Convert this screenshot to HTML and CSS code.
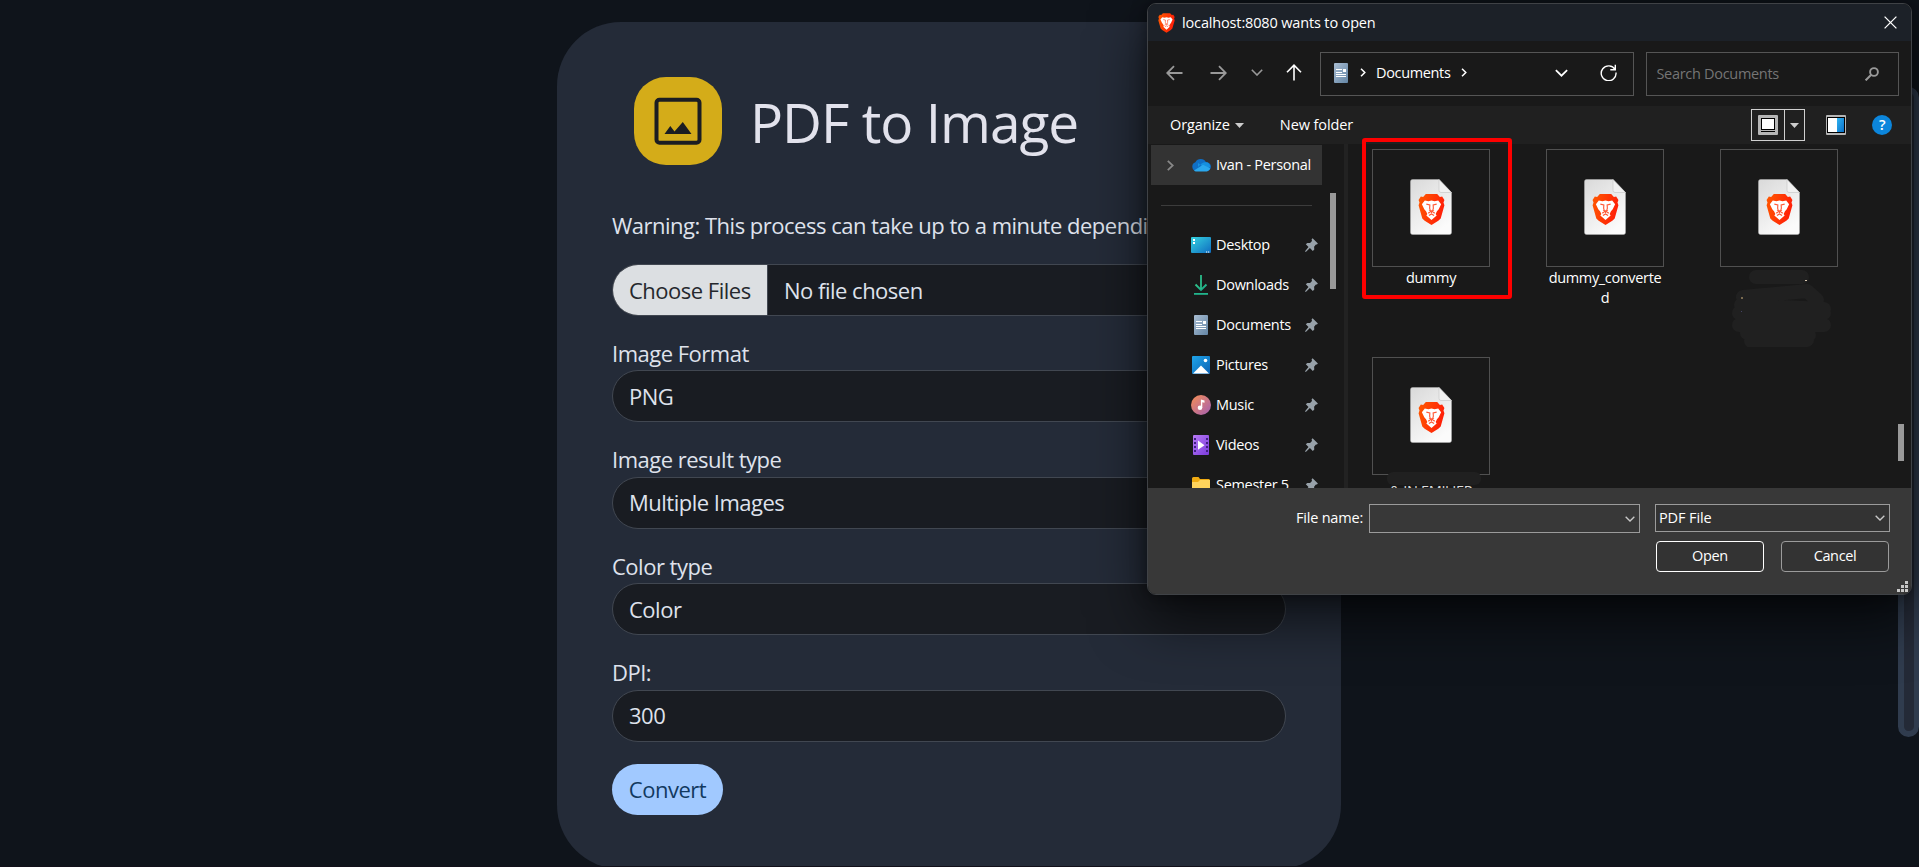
FILE: index.html
```html
<!DOCTYPE html>
<html lang="en">
<head>
<meta charset="utf-8">
<title>PDF to Image</title>
<link rel="stylesheet" href="styles.css">
</head>
<body>
<svg width="0" height="0" class="defs">
  <defs>
    <linearGradient id="gBrave" x1="0" y1="0" x2="1" y2="0.3"><stop offset="0" stop-color="#ff5a00"/><stop offset="1" stop-color="#ff2008"/></linearGradient>
    <linearGradient id="gPage" x1="0" y1="0" x2="0.6" y2="1"><stop offset="0" stop-color="#d9d9d9"/><stop offset="1" stop-color="#fbfbfb"/></linearGradient>
    <linearGradient id="gDoc" x1="0" y1="0" x2="1" y2="1"><stop offset="0" stop-color="#a9bdd2"/><stop offset="1" stop-color="#6486a6"/></linearGradient>
    <linearGradient id="gDesk" x1="0" y1="0" x2="1" y2="1"><stop offset="0" stop-color="#36d3e0"/><stop offset="1" stop-color="#0f6cc0"/></linearGradient>
    <linearGradient id="gPic" x1="0" y1="0" x2="1" y2="1"><stop offset="0" stop-color="#1fa5ea"/><stop offset="1" stop-color="#0b62b4"/></linearGradient>
    <linearGradient id="gMusic" x1="0" y1="0" x2="1" y2="1"><stop offset="0.1" stop-color="#ef8a5c"/><stop offset="1" stop-color="#a35fb5"/></linearGradient>
    <linearGradient id="gVid" x1="0" y1="0" x2="1" y2="1"><stop offset="0" stop-color="#b87af5"/><stop offset="1" stop-color="#7a3bdc"/></linearGradient>
    <linearGradient id="gPane" x1="0" y1="0" x2="1" y2="1"><stop offset="0" stop-color="#2fb4f2"/><stop offset="1" stop-color="#0a6fc8"/></linearGradient>
    <linearGradient id="gDown" x1="0" y1="0" x2="1" y2="1"><stop offset="0" stop-color="#2fc58a"/><stop offset="1" stop-color="#17a589"/></linearGradient>
    <symbol id="brave" viewBox="0 0 26 30">
      <path d="M7.500 0h11l2.600 2.900 2.200-.4 2.200 3.400-.9 2.400.9 2.700-3.600 12.600-2.300 2.200-6.600 4.200-6.600-4.200-2.300-2.200L.5 11l.9-2.700L.5 5.900l2.200-3.400 2.200.4z" fill="url(#gBrave)"/>
      <path d="M6.500 6.200l3.500.8 3-.8 3 .8 3.500-.8 2.800 3.600-2.300 5-1.700 2-1.300 2.600 1 1.300-5 4.500-5-4.500 1-1.300-1.300-2.600-1.700-2-2.300-5z" fill="#fff"/>
      <path d="M8 9.800l3.400.7-.2 3.300.6 2.200M18 9.800l-3.400.7.2 3.300-.6 2.200M9.800 18.500l1.700-.8M16.200 18.500l-1.700-.8M10.500 20.800L13 19.300l2.500 1.500M11.500 16.300h3L13 18z" fill="none" stroke="#ff5a38" stroke-width="1.100"/>
    </symbol>
    <symbol id="file" viewBox="0 0 42 56">
      <path d="M2.500.5H29L41.500 13.500v40a2 2 0 0 1-2 2h-37a2 2 0 0 1-2-2v-51a2 2 0 0 1 2-2z" fill="url(#gPage)" stroke="#b5b5b5" stroke-width=".5"/>
      <path d="M29 .5L41.500 13.500H31a2 2 0 0 1-2-2z" fill="#f1f1f1" stroke="#c9c9c9" stroke-width=".7"/>
      <use href="#brave" x="8" y="15" width="27" height="31"/>
    </symbol>
    <symbol id="doc" viewBox="0 0 14 20">
      <rect width="14" height="20" rx="1" fill="url(#gDoc)"/>
      <path d="M2 6.500h6M2 9.500h6M2 11.500h10M2 13.500h10" stroke="#fff" stroke-width="1"/><rect x="9" y="6" width="3" height="3" fill="#fff"/>
    </symbol>
    <symbol id="pin" viewBox="0 0 13 14">
      <path d="M7.600.3L12.900 5.600l-1 1-1-.1-1.800 2.200.2 2.900-1.500 1.400-2.900-2.900L.8 14l-.8-.8 3.500-4.200L.8 6.300l1.500-1.400 2.800.2 1.900-2-.4-1.800z" fill="#98a2aa"/>
    </symbol>
    <symbol id="down" viewBox="0 0 12 7"><path d="M.8.8L6 6 11.200.8" fill="none" stroke="currentColor" stroke-width="1.600"/></symbol>
    <symbol id="right" viewBox="0 0 6 10"><path d="M.8.8L5 5 .8 9.200" fill="none" stroke="currentColor" stroke-width="1.700"/></symbol>
  </defs>
</svg>

<main class="card">
  <header class="head">
    <span class="badge">
      <svg width="48" height="48" viewBox="0 0 48 48"><rect x="2.500" y="2.700" width="43" height="43" rx="3" fill="none" stroke="#1b1d22" stroke-width="4"/><path d="M10.500 37l5.800-8 4.200 5.500 8.300-9.500 8.700 12z" fill="#1b1d22"/></svg>
    </span>
    <h1>PDF to Image</h1>
  </header>
  <p class="warning">Warning: This process can take up to a minute depending</p>
  <div class="control file"><span class="choose"><span>Choose Files</span></span><span>No file chosen</span></div>
  <div class="group"><label>Image Format</label><div class="control"><span>PNG</span></div></div>
  <div class="group"><label>Image result type</label><div class="control"><span>Multiple Images</span></div></div>
  <div class="group"><label>Color type</label><div class="control"><span>Color</span></div></div>
  <div class="group"><label>DPI:</label><div class="control"><span>300</span></div></div>
  <button class="convert">Convert</button>
</main>
<div class="page-scroll"></div>
<div class="bottom-line"></div>

<section class="dialog">
  <div class="titlebar">
    <svg width="17" height="20"><use href="#brave"/></svg>
    <span class="title">localhost:8080 wants to open</span>
    <svg class="close" width="13" height="13" viewBox="0 0 13 13"><path d="M.6.6l11.800 11.800M12.400.6L.6 12.400" stroke="#fff" stroke-width="1.300"/></svg>
  </div>
  <div class="nav">
    <svg class="dim" width="17" height="16" viewBox="0 0 17 16"><path d="M16.500 8H1.500M8 1.200L1.200 8 8 14.800" fill="none" stroke="currentColor" stroke-width="1.800"/></svg>
    <svg class="dim fwd" width="17" height="16" viewBox="0 0 17 16"><path d="M.5 8h15M9 1.200L15.800 8 9 14.800" fill="none" stroke="currentColor" stroke-width="1.800"/></svg>
    <svg class="dim rec" width="12" height="7"><use href="#down"/></svg>
    <svg class="up" width="16" height="17" viewBox="0 0 16 17"><path d="M8 16.500v-15M1 8.200l7-7 7 7" fill="none" stroke="currentColor" stroke-width="1.600"/></svg>
    <div class="address">
      <svg width="14" height="20"><use href="#doc"/></svg>
      <svg class="crumb" width="6" height="9"><use href="#right"/></svg>
      <span class="t-path">Documents</span>
      <svg class="crumb2" width="6" height="9"><use href="#right"/></svg>
      <svg class="drop" width="13" height="8"><use href="#down"/></svg>
      <svg class="reload" width="17" height="17" viewBox="0 0 17 17"><path d="M15 5.500A7.400 7.400 0 1 0 16 8.500M15.300.8v5h-5" fill="none" stroke="#fff" stroke-width="1.400"/></svg>
    </div>
    <div class="search"><span>Search Documents</span>
      <svg width="14" height="14" viewBox="0 0 14 14"><circle cx="9" cy="5" r="3.900" fill="none" stroke="#999" stroke-width="1.900"/><path d="M6.200 7.800L.6 13.400" stroke="#999" stroke-width="2"/></svg>
    </div>
  </div>
  <div class="toolbar">
    <span class="t-org">Organize</span>
    <svg class="tri" width="9" height="5"><path d="M0 0h9L4.500 5z" fill="#ccc"/></svg>
    <span class="t-new">New folder</span>
    <div class="view">
      <span class="viewicon"><svg width="20" height="20"><rect width="20" height="20" rx="1" fill="#b5b5b5"/><rect x="3.500" y="3.500" width="13" height="11" fill="#fff" stroke="#000" stroke-width="1"/><path d="M3 16.500h14" stroke="#000" stroke-width="1"/></svg></span>
      <span class="viewdrop"><svg width="9" height="5"><path d="M0 0h9L4.500 5z" fill="#ccc"/></svg></span>
    </div>
    <svg class="pane" width="20" height="20"><rect width="20" height="20" rx="1" fill="#b5b5b5"/><rect x="1" y="2" width="18" height="16" fill="#000"/><rect x="2" y="3" width="9" height="14" fill="#fff"/><rect x="11" y="3" width="7" height="14" fill="url(#gPane)"/></svg>
    <span class="help">?</span>
  </div>
  <div class="content">
    <aside class="side">
      <div class="item selected">
        <svg class="exp" width="7" height="11" viewBox="0 0 7 11"><path d="M.8.8l5 4.700-5 4.700" fill="none" stroke="#888" stroke-width="1.800"/></svg>
        <svg class="ico" width="20" height="14" viewBox="0 0 20 14"><path d="M5 13a4.500 4.500 0 0 1-.6-8.700A6 6 0 0 1 15 4.200a4.400 4.400 0 0 1 1 8.800z" fill="#0f6fc6"/><path d="M7 5l8 6 4-2a4 4 0 0 0-4-4.800C13 3.800 10 5 7 9z" fill="#1590e0"/><path d="M3 12.500L12 6.800l7.200 3.500A3.800 3.800 0 0 1 16 13.500H5a4 4 0 0 1-2-1z" fill="#2aa8ee"/></svg>
        <span class="name">Ivan - Personal</span>
      </div>
      <hr>
      <div class="item"><svg class="ico" width="20" height="16"><rect width="20" height="16" rx="1" fill="url(#gDesk)"/><path d="M2 2h2v2H2zM2 5h2v2H2zM15 14.500h1.200v1H15zM17 14.500h1.200v1H17z" fill="#fff"/></svg><span class="name">Desktop</span><svg class="pin" width="13" height="14"><use href="#pin"/></svg></div>
      <div class="item"><svg class="ico" width="20" height="20"><path d="M4.500 9.500L10 15l5.500-5.500" fill="none" stroke="url(#gDown)" stroke-width="1.900"/><path d="M9.100 0h1.800v14H9.100z" fill="#2bbd8b"/><path d="M3 18h14v1.800H3z" fill="#21b48c"/></svg><span class="name">Downloads</span><svg class="pin" width="13" height="14"><use href="#pin"/></svg></div>
      <div class="item"><svg class="ico" width="20" height="20"><use href="#doc" x="3" width="14" height="20"/></svg><span class="name">Documents</span><svg class="pin" width="13" height="14"><use href="#pin"/></svg></div>
      <div class="item"><svg class="ico" width="20" height="18"><rect x="1" width="18" height="18" rx="1" fill="url(#gPic)"/><path d="M2 17.500L10 9.500l8 8z" fill="#fff"/><circle cx="14.500" cy="4.500" r="1.800" fill="#fff"/></svg><span class="name">Pictures</span><svg class="pin" width="13" height="14"><use href="#pin"/></svg></div>
      <div class="item"><svg class="ico" width="20" height="20"><circle cx="10" cy="10" r="10" fill="url(#gMusic)"/><circle cx="9" cy="12.800" r="2.300" fill="#fff"/><path d="M9.900 4.500l3.600 1v2.300l-2.200-.5v5.500H9.900z" fill="#fff"/></svg><span class="name">Music</span><svg class="pin" width="13" height="14"><use href="#pin"/></svg></div>
      <div class="item"><svg class="ico" width="20" height="20"><rect x="2" width="16" height="20" rx="1" fill="url(#gVid)"/><path d="M3 3h2v2H3zM3 7h2v2H3zM3 11h2v2H3zM3 15h2v2H3zM15 3h2v2h-2zM15 7h2v2h-2zM15 11h2v2h-2zM15 15h2v2h-2z" fill="#3f2080"/><path d="M7 5.500l6.500 4.700L7 14.800z" fill="#fff"/></svg><span class="name">Videos</span><svg class="pin" width="13" height="14"><use href="#pin"/></svg></div>
      <div class="item"><svg class="ico" width="20" height="16"><path d="M1 1.500A1.500 1.500 0 0 1 2.500 0h5L9 2h9.500V16H1z" fill="#f0ab12"/><path d="M1 5h6l2-2h10v13H1z" fill="#ffd35c"/></svg><span class="name">Semester 5</span><svg class="pin" width="13" height="14"><use href="#pin"/></svg></div>
      <span class="side-thumb"></span>
    </aside>
    <div class="files">
      <figure><div class="thumb"><svg width="42" height="56"><use href="#file"/></svg></div><figcaption>dummy</figcaption></figure>
      <figure><div class="thumb"><svg width="42" height="56"><use href="#file"/></svg></div><figcaption>dummy_converte<br>d</figcaption></figure>
      <figure><div class="thumb"><svg width="42" height="56"><use href="#file"/></svg></div>
        <svg class="scribble" width="106" height="80"><path d="M27 10H73M14 30L78 24 88 33M10 46H95M12 38L95 42M10 58L95 58M18 66L80 68M22 74L78 73M16 50H80" fill="none" stroke="#202020" stroke-width="14" stroke-linecap="round" stroke-linejoin="round"/><path d="M76 13h2v1h-2z" fill="#d8c8b0"/><path d="M12 30h2v2h-2z" fill="#7a6a50"/><path d="M12 44h1v1h-1z" fill="#446"/></svg></figure>
      <figure><div class="thumb"><svg width="42" height="56"><use href="#file"/></svg></div><figcaption class="cut">&amp; IN EMILIER</figcaption><span class="smudge"></span></figure>
      <span class="files-thumb"></span>
    </div>
  </div>
  <div class="footer">
    <div class="row">
      <span class="t-fn">File name:</span>
      <div class="combo fname"><svg width="10" height="6"><use href="#down"/></svg></div>
      <div class="combo ftype"><span class="t-pdf">PDF File</span><svg width="10" height="6"><use href="#down"/></svg></div>
    </div>
    <div class="row buttons"><button class="btn primary">Open</button><button class="btn">Cancel</button></div>
    <svg class="grip" width="12" height="12"><path d="M8 0h3v3H8zM4 4h3v3H4zM8 4h3v3H8zM0 8h3v3H0zM4 8h3v3H4zM8 8h3v3H8z" fill="#c8c8c8"/></svg>
  </div>
  <div class="highlight"></div>
</section>
</body>
</html>
```

FILE: styles.css
```css
* { box-sizing: border-box; }
body { margin: 0; height: 867px; overflow: hidden; position: relative; background: #0f141b; font-family: "Open Sans", "Noto Sans", sans-serif; color: #dfe2ec; }
svg { display: block; flex: none; }
.defs { position: absolute; }
span, label { white-space: nowrap; }

.card { width: 784px; height: 847px; margin: 22px 0 0 557px; padding: 55px 55px 0; border-radius: 64px; background: #242b38; display: flex; flex-direction: column; font-size: 22px; letter-spacing: -0.5px; }
.head { display: flex; align-items: center; height: 88px; padding-left: 22px; gap: 28px; flex: none; }
.badge { width: 88px; height: 88px; border-radius: 32px; background: #d4ac19; display: grid; place-items: center; }
h1 { margin: 2px 0 0; font-weight: 400; font-size: 55px; line-height: 80px; letter-spacing: -1px; color: #e2e2ec; white-space: nowrap; }
.warning { margin: 45px 0 0; height: 54px; line-height: 30px; white-space: nowrap; flex: none; }
.control { height: 52px; border: 1px solid #414751; border-radius: 26px; background: #191c22; display: flex; align-items: center; padding: 0 0 1px 16px; line-height: 30px; width: 674px; }
.file { padding: 0; overflow: hidden; flex: none; }
.choose { align-self: stretch; width: 155px; padding-left: 16px; display: flex; align-items: center; background: #dcdfe2; color: #25282d; border-right: 1px solid #414751; margin-right: 16px; }
.group { margin-top: 23px; height: 83.400px; display: flex; flex-direction: column; justify-content: space-between; flex: none; }
.group label { line-height: 28px; height: 31px; }
.convert { margin-top: 22px; width: 111px; height: 51px; border: 0; border-radius: 26px; background: #a1c9ff; color: #12395f; font: inherit; letter-spacing: -0.5px; padding: 0 0 1px; flex: none; }

.page-scroll { position: absolute; left: 1898px; top: 87px; width: 21px; height: 650px; border: 6px solid #303c4e; border-width: 6px 5px 6px 6px; border-radius: 11px; background: #242a37; }
.bottom-line { position: absolute; left: 0; top: 866px; width: 1919px; height: 1px; background: #12101a; }

.dialog { position: absolute; left: 1147px; top: 3px; width: 765px; height: 592px; border: 1px solid #3f4246; border-radius: 9px; background: #191919; box-shadow: 0 24px 55px rgba(0,0,0,.65), 0 0 16px rgba(0,0,0,.4); color: #fff; font-size: 14.500px; letter-spacing: -0.35px; line-height: 20px; display: flex; flex-direction: column; }
.titlebar { height: 37px; flex: none; background: #1c2128; border-radius: 8px 8px 0 0; display: flex; align-items: center; padding: 0 14px 0 10px; }
.title { margin-left: 7px; letter-spacing: -0.15px; }
.close { margin-left: auto; }
.nav { height: 65px; flex: none; display: flex; align-items: center; padding: 0 12px 2px 18px; }
.dim { color: #999; }
.fwd { margin-left: 27px; }
.rec { margin-left: 24px; }
.up { margin-left: 23px; }
.address { margin-left: 18px; margin-top: 2px; width: 315px; height: 44px; border: 1px solid #555; display: flex; align-items: center; padding: 0 16px 2px 13px; }
.crumb { margin: 0 10px 0 12px; }
.crumb2 { margin-left: 11px; }
.drop { margin-left: auto; margin-right: 32px; }
.search { margin-left: 12px; margin-top: 2px; width: 253px; height: 44px; border: 1px solid #555; display: flex; align-items: center; justify-content: space-between; padding: 0 19px 0 9px; color: #757575; letter-spacing: -0.3px; }
.toolbar { height: 38px; flex: none; background: #202020; display: flex; align-items: center; padding: 0 19px 0 22px; }
.t-org { letter-spacing: -0.1px; }
.tri { margin-left: 5px; }
.t-new { margin-left: 36px; letter-spacing: -0.1px; }
.view { margin-left: auto; width: 54px; height: 32px; border: 1px solid #d0d0d0; display: flex; }
.viewicon { width: 33px; border-right: 1px solid #d0d0d0; display: grid; place-items: center; }
.viewdrop { flex: 1; display: grid; place-items: center; }
.pane { margin: 0 26px 0 21px; }
.help { width: 20px; height: 20px; border-radius: 50%; background: #0c86dc; text-align: center; font-weight: 600; }

.content { height: 344px; flex: none; display: flex; overflow: hidden; }
.side { position: relative; width: 200px; flex: none; border-right: 4px solid #222; padding: 1px 0 0 3px; overflow: hidden; }
.item { height: 40px; width: 171px; display: flex; align-items: center; padding-left: 40px; }
.selected { background: #333; padding-left: 16px; }
.selected .ico { margin-left: 17px; }
.name { margin-left: 5px; letter-spacing: -0.3px; }
.side hr { width: 151px; height: 1px; border: 0; background: #3c3c3c; margin: 20px 0 19px 10px; }
.pin { margin-left: auto; margin-right: 4px; }
.side-thumb { position: absolute; left: 182px; top: 49px; width: 6px; height: 96px; background: #999; }
.files { position: relative; flex: 1; display: grid; grid-template-columns: repeat(3, 174px); grid-auto-rows: 208px; padding: 5px 0 0 24px; overflow: hidden; }
figure { margin: 0; width: 118px; position: relative; }
.thumb { height: 118px; border: 1px solid #505050; display: grid; justify-content: center; padding-top: 29px; align-content: start; }
figcaption { text-align: center; margin: 1px -2px 0; }
.scribble { position: absolute; left: 9px; top: 118px; }
.smudge { position: absolute; left: 15px; top: 115px; width: 94px; height: 13px; border-radius: 6px; background: #202020; }
.cut { margin-top: 6px; color: #ddd; }
.files-thumb { position: absolute; left: 550px; top: 280px; width: 6px; height: 37px; background: #999; }

.footer { position: relative; flex: 1; background: #383838; border-radius: 0 0 8px 8px; padding: 16px 21px 0 0; }
.row { display: flex; justify-content: flex-end; align-items: flex-start; }
.t-fn { margin-right: 6px; line-height: 28px; letter-spacing: -0.2px; }
.combo { border: 1px solid #9b9b9b; display: flex; align-items: center; justify-content: flex-end; padding: 0 4px 0 3px; color: #c8c8c8; }
.fname { width: 271px; height: 29px; margin-right: 15px; }
.ftype { width: 235px; height: 28px; justify-content: space-between; background: #333; }
.t-pdf { color: #fff; letter-spacing: -0.1px; }
.buttons { margin-top: 8px; gap: 17px; padding-right: 1px; }
.btn { width: 108px; height: 31px; border: 1px solid #9b9b9b; border-radius: 4px; background: #333; color: #fff; font: inherit; letter-spacing: inherit; padding: 0 0 1px; }
.primary { border-color: #fff; }
.grip { position: absolute; right: 2px; bottom: 1px; }
.highlight { position: absolute; left: 214px; top: 134px; width: 150px; height: 161px; border: 4px solid #fe0000; border-radius: 3px; }
```
